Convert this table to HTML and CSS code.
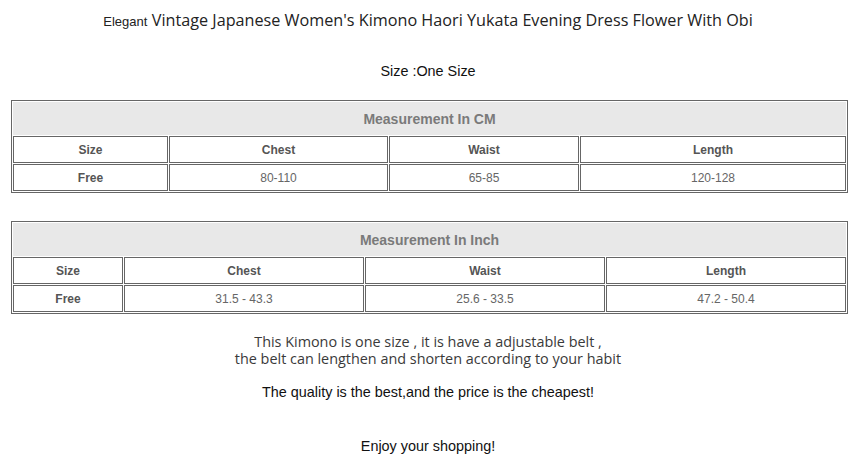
FILE: index.html
```html
<!DOCTYPE html>
<html>
<head>
<meta charset="utf-8">
<link rel="stylesheet" href="styles.css">
</head>
<body>
<div class="page">
  <p class="title"><span class="t-small">Elegant</span> <span class="t-big">Vintage Japanese Women's Kimono Haori Yukata Evening Dress Flower With Obi</span></p>
  <p class="size">Size :One Size</p>

  <table class="chart chart-cm">
    <colgroup><col class="c1"><col class="c2"><col class="c3"><col class="c4"></colgroup>
    <tr><td class="cap" colspan="4">Measurement In CM</td></tr>
    <tr class="head"><td>Size</td><td>Chest</td><td>Waist</td><td>Length</td></tr>
    <tr class="data"><td class="b">Free</td><td>80-110</td><td>65-85</td><td>120-128</td></tr>
  </table>

  <table class="chart chart-in">
    <colgroup><col class="c1"><col class="c2"><col class="c3"><col class="c4"></colgroup>
    <tr><td class="cap" colspan="4">Measurement In Inch</td></tr>
    <tr class="head"><td>Size</td><td>Chest</td><td>Waist</td><td>Length</td></tr>
    <tr class="data"><td class="b">Free</td><td>31.5 - 43.3</td><td>25.6 - 33.5</td><td>47.2 - 50.4</td></tr>
  </table>

  <p class="note">This Kimono is one size , it is have a adjustable belt ,<br>the belt can lengthen and shorten according to your habit</p>
  <p class="quality">The quality is the best,and the price is the cheapest!</p>
  <p class="enjoy">Enjoy your shopping!</p>
</div>
</body>
</html>
```

FILE: styles.css
```css
html, body {
  margin: 0;
  padding: 0;
  background: #ffffff;
}

.page {
  width: 856px;
  padding-top: 10px;
  font-family: "Liberation Sans", Arial, sans-serif;
  color: #000;
}

p {
  margin: 0;
  text-align: center;
}

.title {
  line-height: 20px;
  height: 20px;
  color: #222;
}

.t-small {
  font-family: "Liberation Sans", Arial, sans-serif;
  font-size: 13px;
}

.t-big {
  font-family: "Open Sans", sans-serif;
  font-size: 16.2px;
}

.size {
  margin-top: 31px;
  line-height: 20px;
  font-size: 14.4px;
  color: #111;
}

.chart {
  margin-left: 11px;
  width: 837px;
  table-layout: fixed;
  border-collapse: separate;
  border-spacing: 1px;
  border: 1px solid #666;
  font-family: "Liberation Sans", Arial, sans-serif;
  font-size: 12px;
  text-align: center;
}

.chart td {
  border: 1px solid #666;
  padding: 0;
  text-align: center;
}

.chart-cm {
  margin-top: 19px;
}

.chart-in {
  margin-top: 28px;
}

.chart-cm .c1 { width: 155px; }
.chart-cm .c2 { width: 219px; }
.chart-cm .c3 { width: 190px; }
.chart-cm .c4 { width: 266px; }

.chart-in .c1 { width: 110px; }
.chart-in .c2 { width: 240px; }
.chart-in .c3 { width: 240px; }
.chart-in .c4 { width: 240px; }

.chart td.cap {
  height: 31px;
  background: #e8e8e8;
  border-color: #e8e8e8;
  color: #7a7a7a;
  font-weight: bold;
  font-size: 14px;
}

.chart .head td {
  height: 25px;
  color: #555;
  font-weight: bold;
}

.chart .data td {
  height: 25px;
  color: #666;
}

.chart .data td.b {
  font-weight: bold;
  color: #555;
}

.note {
  margin-top: 19px;
  font-family: "Open Sans", sans-serif;
  font-size: 14.4px;
  line-height: 17px;
  color: #3a3a3a;
}

.quality {
  margin-top: 17px;
  font-size: 14.4px;
  line-height: 17px;
  color: #111;
}

.enjoy {
  margin-top: 37px;
  font-size: 14.4px;
  line-height: 17px;
  color: #111;
}
```
